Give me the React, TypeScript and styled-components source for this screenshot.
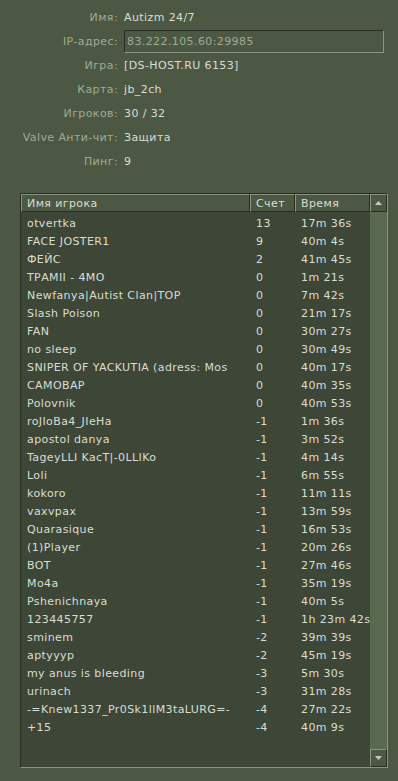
import React from "react";
import styled, { createGlobalStyle } from "styled-components";

const C = {
  bg: "#4c5844",
  list: "#3e4637",
  track: "#5a6a50",
  text: "#d8ded3",
  label: "#a0aa95",
  light: "#8c9284",
  dark: "#292c21",
};

const Global = createGlobalStyle`
  html, body { margin: 0; padding: 0; background: ${C.bg}; }
  body { font-family: "DejaVu Sans", Verdana, sans-serif; font-size: 11px; letter-spacing: 0.4px; color: ${C.text}; }
  * { box-sizing: border-box; }
`;

const Page = styled.div`
  height: 100vh;
  display: flex;
  flex-direction: column;
  padding: 5px 10px 13px 20px;
`;

const Info = styled.div`
  display: grid;
  grid-template-columns: 98px 1fr;
  grid-auto-rows: 24px;
  column-gap: 6px;
  align-items: center;
  padding-right: 4px;
`;

const Label = styled.div`
  text-align: right;
  color: ${C.label};
  white-space: nowrap;
  justify-self: end;
`;

const Value = styled.div`
  color: ${C.text};
  white-space: nowrap;
`;

const Field = styled.div`
  height: 23px;
  display: flex;
  align-items: center;
  padding-left: 2px;
  color: ${C.label};
  border-top: 1px solid ${C.dark};
  border-left: 1px solid ${C.dark};
  border-bottom: 1px solid ${C.light};
  border-right: 1px solid ${C.light};
`;

const Frame = styled.div`
  margin-top: 20px;
  flex: 1;
  display: grid;
  grid-template-columns: 1fr 17px;
  border-top: 1px solid ${C.dark};
  border-left: 1px solid ${C.dark};
  border-bottom: 1px solid ${C.light};
  border-right: 1px solid ${C.light};
  min-height: 0;
`;

const Main = styled.div`
  display: flex;
  flex-direction: column;
  min-height: 0;
`;

const Cols = "229px 45px 75px";

const HeadRow = styled.div`
  display: grid;
  grid-template-columns: ${Cols};
  height: 18px;
  background: ${C.bg};
`;

const HeadCell = styled.div`
  display: flex;
  align-items: center;
  padding-left: 5px;
  border-top: 1px solid ${C.light};
  border-left: 1px solid ${C.light};
  border-right: 1px solid ${C.dark};
  border-bottom: 1px solid ${C.dark};
  color: ${C.text};
  white-space: nowrap;
  overflow: hidden;
`;

const List = styled.div`
  flex: 1;
  background: ${C.list};
  padding-top: 2px;
  overflow: hidden;
`;

const Row = styled.div`
  display: grid;
  grid-template-columns: ${Cols};
  height: 18px;
  align-items: center;
`;

const Cell = styled.div`
  padding-left: 6px;
  white-space: nowrap;
  overflow: hidden;
  color: ${C.text};
`;

const Scroll = styled.div`
  display: flex;
  flex-direction: column;
  background: ${C.track};
`;

const ScrollBtn = styled.div`
  height: 18px;
  display: flex;
  align-items: center;
  justify-content: center;
  background: ${C.bg};
  border-top: 1px solid ${C.light};
  border-left: 1px solid ${C.light};
  border-right: 1px solid ${C.dark};
  border-bottom: 1px solid ${C.dark};
`;

const Track = styled.div`
  flex: 1;
`;

const Arrow = ({ down }: { down?: boolean }) => (
  <svg width="7" height="4" viewBox="0 0 7 4">
    {down ? (
      <polygon points="0,0 7,0 3.5,4" fill="#c6cbbd" />
    ) : (
      <polygon points="3.5,0 7,4 0,4" fill="#c6cbbd" />
    )}
  </svg>
);

const info: [string, string][] = [
  ["Имя:", "Autizm 24/7"],
  ["IP-адрес:", "83.222.105.60:29985"],
  ["Игра:", "[DS-HOST.RU 6153]"],
  ["Карта:", "jb_2ch"],
  ["Игроков:", "30 / 32"],
  ["Valve Анти-чит:", "Защита"],
  ["Пинг:", "9"],
];

const players: [string, string, string][] = [
  ["otvertka", "13", "17m 36s"],
  ["FACE JOSTER1", "9", "40m 4s"],
  ["ФЕЙС", "2", "41m 45s"],
  ["ТРАМII - 4MO", "0", "1m 21s"],
  ["Newfanya|Autist Clan|TOP", "0", "7m 42s"],
  ["Slash Poison", "0", "21m 17s"],
  ["FAN", "0", "30m 27s"],
  ["no sleep", "0", "30m 49s"],
  ["SNIPER OF YACKUTIA (adress: Mos", "0", "40m 17s"],
  ["CAMOBAP", "0", "40m 35s"],
  ["Polovnik", "0", "40m 53s"],
  ["roJIoBa4_JIeHa", "-1", "1m 36s"],
  ["apostol danya", "-1", "3m 52s"],
  ["TageyLLI KacT|-0LLIKo", "-1", "4m 14s"],
  ["Loli", "-1", "6m 55s"],
  ["kokoro", "-1", "11m 11s"],
  ["vaxvpax", "-1", "13m 59s"],
  ["Quarasique", "-1", "16m 53s"],
  ["(1)Player", "-1", "20m 26s"],
  ["BOT", "-1", "27m 46s"],
  ["Mo4a", "-1", "35m 19s"],
  ["Pshenichnaya", "-1", "40m 5s"],
  ["123445757", "-1", "1h 23m 42s"],
  ["sminem", "-2", "39m 39s"],
  ["aptyyyp", "-2", "45m 19s"],
  ["my anus is bleeding", "-3", "5m 30s"],
  ["urinach", "-3", "31m 28s"],
  ["-=Knew1337_Pr0Sk1llM3taLURG=-", "-4", "27m 22s"],
  ["+15", "-4", "40m 9s"],
];

export default function App() {
  return (
    <>
      <Global />
      <Page>
        <Info>
          {info.map(([l, v]) => (
            <React.Fragment key={l}>
              <Label>{l}</Label>
              {l === "IP-адрес:" ? <Field>{v}</Field> : <Value>{v}</Value>}
            </React.Fragment>
          ))}
        </Info>
        <Frame>
          <Main>
            <HeadRow>
              <HeadCell>Имя игрока</HeadCell>
              <HeadCell>Счет</HeadCell>
              <HeadCell>Время</HeadCell>
            </HeadRow>
            <List>
              {players.map(([n, s, t], i) => (
                <Row key={i}>
                  <Cell>{n}</Cell>
                  <Cell>{s}</Cell>
                  <Cell>{t}</Cell>
                </Row>
              ))}
            </List>
          </Main>
          <Scroll>
            <ScrollBtn>
              <Arrow />
            </ScrollBtn>
            <Track />
            <ScrollBtn>
              <Arrow down />
            </ScrollBtn>
          </Scroll>
        </Frame>
      </Page>
    </>
  );
}
